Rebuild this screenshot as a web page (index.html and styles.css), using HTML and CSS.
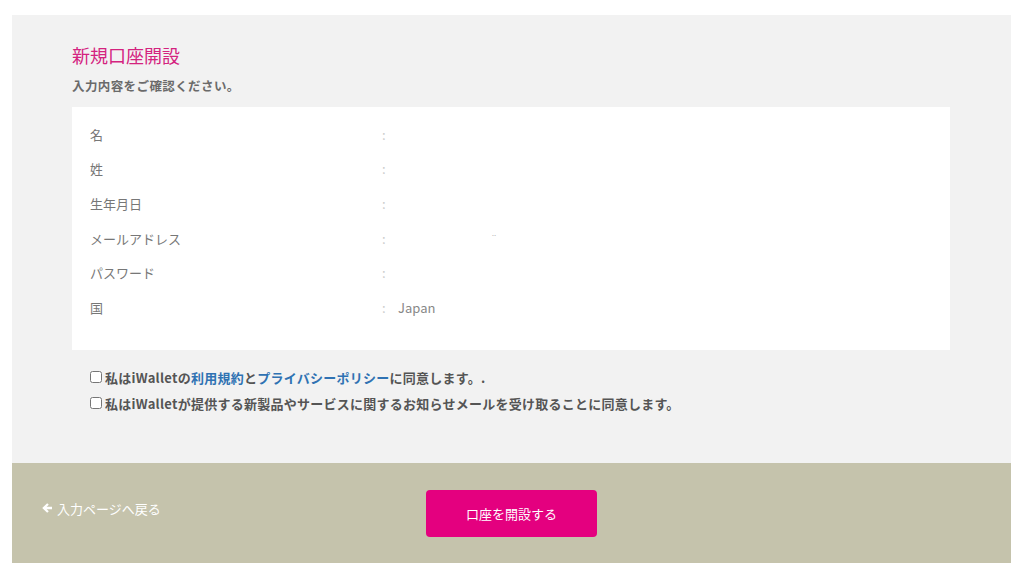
FILE: index.html
```html
<!DOCTYPE html>
<html lang="ja">
<head>
<meta charset="utf-8">
<title>新規口座開設</title>
<link rel="stylesheet" href="styles.css">
</head>
<body>
<div class="page">
  <main class="panel">
    <h1 class="title">新規口座開設</h1>
    <p class="lead">入力内容をご確認ください。</p>
    <div class="card">
      <div class="row"><span class="label">名</span><span class="colon">:</span><span class="value"></span></div>
      <div class="row"><span class="label">姓</span><span class="colon">:</span><span class="value"></span></div>
      <div class="row"><span class="label">生年月日</span><span class="colon">:</span><span class="value"></span></div>
      <div class="row"><span class="label">メールアドレス</span><span class="colon">:</span><span class="value faint"><span class="gap"></span>¨</span></div>
      <div class="row"><span class="label">パスワード</span><span class="colon">:</span><span class="value"></span></div>
      <div class="row"><span class="label">国</span><span class="colon">:</span><span class="value">Japan</span></div>
    </div>
    <div class="agree">
      <label class="check"><input type="checkbox"><span>私はiWalletの<a href="#">利用規約</a>と<a href="#">プライバシーポリシー</a>に同意します。.</span></label>
      <label class="check"><input type="checkbox"><span>私はiWalletが提供する新製品やサービスに関するお知らせメールを受け取ることに同意します。</span></label>
    </div>
  </main>
  <footer class="footer">
    <a class="back" href="#"><svg class="arrow" viewBox="0 0 12 12" width="12" height="12"><path d="M6.2 1.2 L1.2 6 L6.2 10.8 L7.8 9.2 L5.6 7.2 H11 V4.8 H5.6 L7.8 2.8 Z" fill="#fff"/></svg>入力ページへ戻る</a>
    <button class="submit" type="button">口座を開設する</button>
  </footer>
</div>
</body>
</html>
```
FILE: styles.css
```css
* { box-sizing: border-box; }
html, body { margin: 0; padding: 0; background: #fff; }
body {
  font-family: "Noto Sans CJK JP", "Noto Sans", sans-serif;
  color: #666;
}
.page {
  width: 999px;
  margin: 15px 0 0 12px;
}
.panel {
  background: #f2f2f2;
  height: 448px;
  padding: 29px 61px 0 60px;
}
.title {
  margin: 0;
  font-size: 18px;
  font-weight: 400;
  color: #d4237f;
  line-height: 22px;
}
.lead {
  margin: 10px 0 0;
  font-size: 12.5px;
  letter-spacing: 0.4px;
  font-weight: 700;
  color: #6a6a6a;
  line-height: 20px;
}
.card {
  background: #fff;
  margin-top: 11px;
  height: 243px;
  padding: 10px 18px 0;
}
.row {
  display: flex;
  align-items: center;
  height: 34.6px;
  font-size: 13px;
  color: #777;
}
.label { width: 292px; }
.colon { width: 16px; color: #ccc; }
.value { color: #888; }
.faint { color: #bbb; font-size: 10px; display: flex; }
.gap { display: inline-block; width: 93px; }
.agree {
  margin-top: 14px;
  padding-left: 18px;
}
.check {
  display: flex;
  align-items: center;
  height: 26px;
  font-size: 13px;
  letter-spacing: 0.25px;
  font-weight: 700;
  color: #555;
}
.check input {
  margin: 0 3px 0 0;
  width: 12px;
  height: 12px;
}
.check a { color: #2f72b3; text-decoration: none; }
.footer {
  background: #c5c3ac;
  height: 100px;
  display: flex;
  align-items: center;
  padding-left: 29px;
}
.back {
  display: flex;
  align-items: center;
  gap: 4px;
  color: #fff;
  font-size: 13px;
  text-decoration: none;
  margin-top: -10px;
  width: 120px;
}
.submit {
  margin-left: 265px;
  width: 171px;
  height: 47px;
  background: #e4007f;
  border: none;
  border-radius: 4px;
  color: #fff;
  font-family: "Noto Sans CJK JP", sans-serif;
  font-size: 13px;
  margin-top: 0;
}
```
